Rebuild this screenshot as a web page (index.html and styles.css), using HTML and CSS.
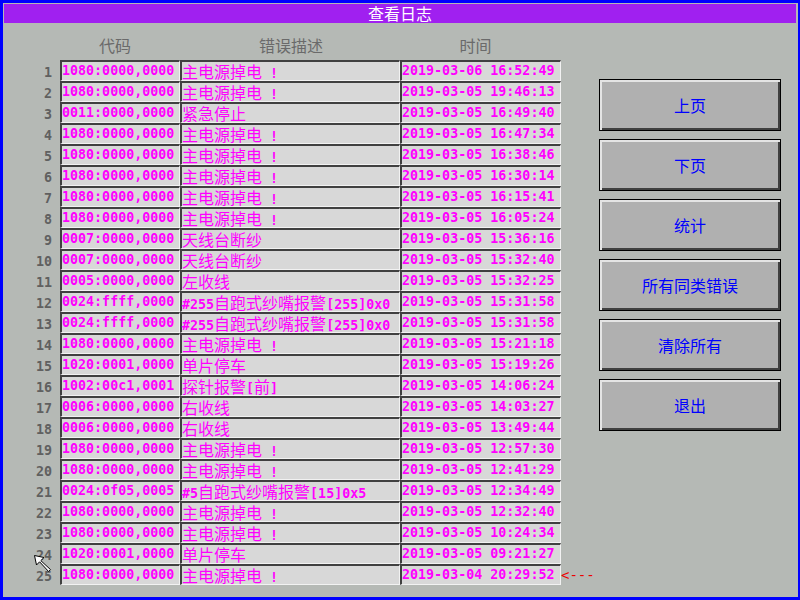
FILE: index.html
```html
<!DOCTYPE html>
<html lang="zh">
<head>
<meta charset="utf-8">
<title>查看日志</title>
<link rel="stylesheet" href="styles.css">
</head>
<body>
<div class="frame">
  <div class="title">查看日志</div>
  <div class="main">
    <div class="log">
      <div class="head"><span class="h-num"></span><span class="h code">代码</span><span class="h desc">错误描述</span><span class="h time">时间</span></div>
      <div class="row"><span class="num">1</span><span class="cell code">1080:0000,0000</span><span class="cell desc">主电源掉电<span class="a"> !</span></span><span class="cell time">2019-03-06 16:52:49</span></div>
      <div class="row"><span class="num">2</span><span class="cell code">1080:0000,0000</span><span class="cell desc">主电源掉电<span class="a"> !</span></span><span class="cell time">2019-03-05 19:46:13</span></div>
      <div class="row"><span class="num">3</span><span class="cell code">0011:0000,0000</span><span class="cell desc">紧急停止</span><span class="cell time">2019-03-05 16:49:40</span></div>
      <div class="row"><span class="num">4</span><span class="cell code">1080:0000,0000</span><span class="cell desc">主电源掉电<span class="a"> !</span></span><span class="cell time">2019-03-05 16:47:34</span></div>
      <div class="row"><span class="num">5</span><span class="cell code">1080:0000,0000</span><span class="cell desc">主电源掉电<span class="a"> !</span></span><span class="cell time">2019-03-05 16:38:46</span></div>
      <div class="row"><span class="num">6</span><span class="cell code">1080:0000,0000</span><span class="cell desc">主电源掉电<span class="a"> !</span></span><span class="cell time">2019-03-05 16:30:14</span></div>
      <div class="row"><span class="num">7</span><span class="cell code">1080:0000,0000</span><span class="cell desc">主电源掉电<span class="a"> !</span></span><span class="cell time">2019-03-05 16:15:41</span></div>
      <div class="row"><span class="num">8</span><span class="cell code">1080:0000,0000</span><span class="cell desc">主电源掉电<span class="a"> !</span></span><span class="cell time">2019-03-05 16:05:24</span></div>
      <div class="row"><span class="num">9</span><span class="cell code">0007:0000,0000</span><span class="cell desc">天线台断纱</span><span class="cell time">2019-03-05 15:36:16</span></div>
      <div class="row"><span class="num">10</span><span class="cell code">0007:0000,0000</span><span class="cell desc">天线台断纱</span><span class="cell time">2019-03-05 15:32:40</span></div>
      <div class="row"><span class="num">11</span><span class="cell code">0005:0000,0000</span><span class="cell desc">左收线</span><span class="cell time">2019-03-05 15:32:25</span></div>
      <div class="row"><span class="num">12</span><span class="cell code">0024:ffff,0000</span><span class="cell desc"><span class="a">#255</span>自跑式纱嘴报警<span class="a">[255]0x0</span></span><span class="cell time">2019-03-05 15:31:58</span></div>
      <div class="row"><span class="num">13</span><span class="cell code">0024:ffff,0000</span><span class="cell desc"><span class="a">#255</span>自跑式纱嘴报警<span class="a">[255]0x0</span></span><span class="cell time">2019-03-05 15:31:58</span></div>
      <div class="row"><span class="num">14</span><span class="cell code">1080:0000,0000</span><span class="cell desc">主电源掉电<span class="a"> !</span></span><span class="cell time">2019-03-05 15:21:18</span></div>
      <div class="row"><span class="num">15</span><span class="cell code">1020:0001,0000</span><span class="cell desc">单片停车</span><span class="cell time">2019-03-05 15:19:26</span></div>
      <div class="row"><span class="num">16</span><span class="cell code">1002:00c1,0001</span><span class="cell desc">探针报警<span class="a">[</span>前<span class="a">]</span></span><span class="cell time">2019-03-05 14:06:24</span></div>
      <div class="row"><span class="num">17</span><span class="cell code">0006:0000,0000</span><span class="cell desc">右收线</span><span class="cell time">2019-03-05 14:03:27</span></div>
      <div class="row"><span class="num">18</span><span class="cell code">0006:0000,0000</span><span class="cell desc">右收线</span><span class="cell time">2019-03-05 13:49:44</span></div>
      <div class="row"><span class="num">19</span><span class="cell code">1080:0000,0000</span><span class="cell desc">主电源掉电<span class="a"> !</span></span><span class="cell time">2019-03-05 12:57:30</span></div>
      <div class="row"><span class="num">20</span><span class="cell code">1080:0000,0000</span><span class="cell desc">主电源掉电<span class="a"> !</span></span><span class="cell time">2019-03-05 12:41:29</span></div>
      <div class="row"><span class="num">21</span><span class="cell code">0024:0f05,0005</span><span class="cell desc"><span class="a">#5</span>自跑式纱嘴报警<span class="a">[15]0x5</span></span><span class="cell time">2019-03-05 12:34:49</span></div>
      <div class="row"><span class="num">22</span><span class="cell code">1080:0000,0000</span><span class="cell desc">主电源掉电<span class="a"> !</span></span><span class="cell time">2019-03-05 12:32:40</span></div>
      <div class="row"><span class="num">23</span><span class="cell code">1080:0000,0000</span><span class="cell desc">主电源掉电<span class="a"> !</span></span><span class="cell time">2019-03-05 10:24:34</span></div>
      <div class="row"><span class="num">24</span><span class="cell code">1020:0001,0000</span><span class="cell desc">单片停车</span><span class="cell time">2019-03-05 09:21:27</span></div>
      <div class="row"><span class="num">25</span><span class="cell code">1080:0000,0000</span><span class="cell desc">主电源掉电<span class="a"> !</span></span><span class="cell time">2019-03-04 20:29:52</span><span class="mark">&lt;---</span></div>
    </div>
    <div class="buttons">
      <div class="btn">上页</div>
      <div class="btn">下页</div>
      <div class="btn">统计</div>
      <div class="btn">所有同类错误</div>
      <div class="btn">清除所有</div>
      <div class="btn">退出</div>
    </div>
  </div>
  <svg class="cursor" width="18" height="18" viewBox="0 0 18 18"><polygon points="0.5,0.5 10,2.5 6.8,5.6 16.5,14.6 14.6,16.5 5.6,6.8 2.5,10" fill="#fff" stroke="#000" stroke-width="1"/></svg>
</div>
</body>
</html>
```

FILE: styles.css
```css
* {
  box-sizing: border-box;
  margin: 0;
  padding: 0;
}

html, body {
  margin: 0;
  background: #0000ff;
}

.frame {
  position: relative;
  width: 800px;
  height: 600px;
  border-style: solid;
  border-color: #0000ff;
  border-width: 3px 2px 3px 3px;
  padding: 1px 2px 0 1px;
  background: #b5b9b5;
  font-family: "Noto Sans CJK SC", sans-serif;
  overflow: hidden;
}

.title {
  height: 19px;
  background: #a020f0;
  color: #ffffff;
  text-align: center;
  font-size: 16px;
  line-height: 19px;
}

.main {
  display: flex;
}

.log {
  width: 595px;
}

.head {
  display: flex;
  height: 37px;
  padding-top: 13px;
  color: #6a6a6a;
  font-size: 16px;
  line-height: 18px;
}

.h-num {
  width: 56px;
}

.h {
  text-align: center;
}

.h.code {
  width: 120px;
  padding-right: 10px;
}

.h.desc {
  width: 220px;
  padding-left: 2px;
}

.h.time {
  width: 161px;
  padding-right: 10px;
}

.row {
  display: flex;
  height: 21px;
}

.num {
  width: 48px;
  margin-right: 8px;
  text-align: right;
  font: bold 13.33px/18px "DejaVu Sans Mono", monospace;
  color: #606060;
  padding-top: 4px;
}

.cell {
  border-top: 2px solid #404040;
  border-left: 2px solid #404040;
  border-right: 1px solid #f2f2f2;
  border-bottom: 1px solid #f2f2f2;
  background: #d8d8d8;
  color: #ff00ff;
  font: bold 13.33px/18px "DejaVu Sans Mono", monospace;
  white-space: nowrap;
}

.cell.code {
  width: 120px;
}

.cell.desc {
  width: 220px;
  font: 16px/18px "Noto Sans CJK SC", sans-serif;
}

.cell.time {
  width: 161px;
}

.a {
  font: bold 13.33px/18px "DejaVu Sans Mono", monospace;
}

.mark {
  color: #ee0000;
  font: 14px/21px "DejaVu Sans Mono", monospace;
  padding-top: 1px;
}

.buttons {
  width: 182px;
  padding-top: 56px;
  display: flex;
  flex-direction: column;
  gap: 8px;
}

.btn {
  height: 52px;
  display: flex;
  align-items: center;
  justify-content: center;
  background: #b0b0b0;
  border: 1px solid #000000;
  box-shadow: inset 2px 2px 0 #e4e4e4, inset -2px -2px 0 #404040;
  color: #0000ff;
  font-size: 16px;
}

.cursor {
  position: absolute;
  left: 31px;
  top: 552px;
}
```
